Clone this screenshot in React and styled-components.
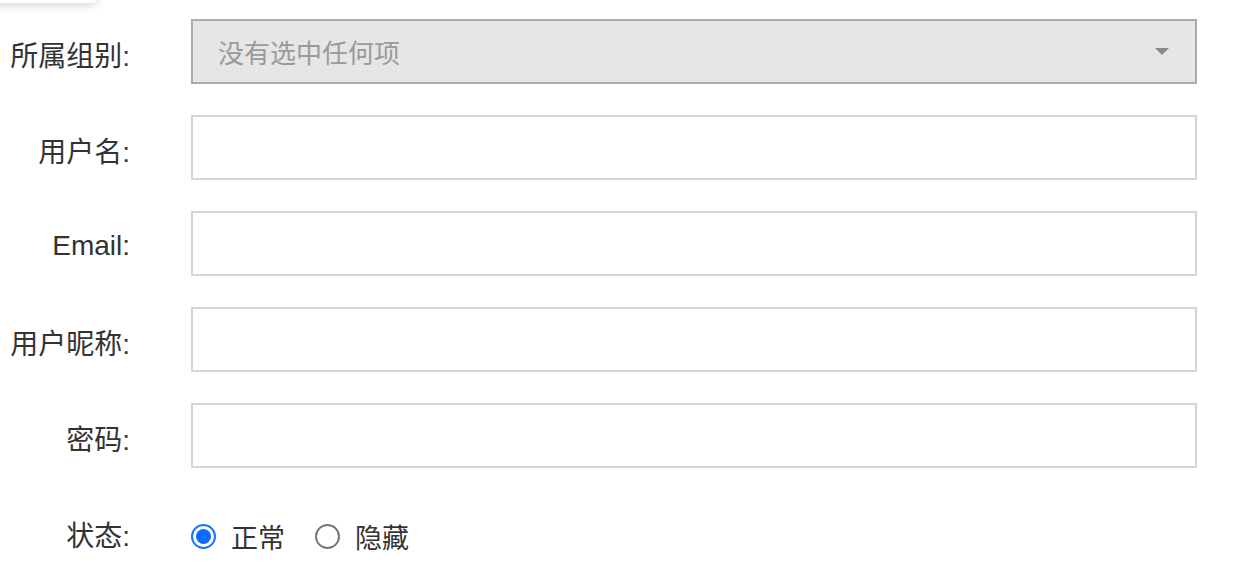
import styled, { createGlobalStyle } from 'styled-components'

const GlobalStyle = createGlobalStyle`
    body {
        margin: 0;
        background: #fff;
        font-family: 'Liberation Sans', 'Noto Sans CJK SC', sans-serif;
        color: #333;
    }
`

const Page = styled.div`
    position: relative;
    width: 1258px;
    height: 588px;
    overflow: hidden;
    padding-top: 19px;
    box-sizing: border-box;
`

const Popover = styled.div`
    position: absolute;
    left: -10px;
    top: -40px;
    width: 106px;
    height: 43px;
    background: #fff;
    border-radius: 4px;
    box-shadow: 0 2px 10px rgba(0, 0, 0, 0.18);
`

const Form = styled.div`
    display: flex;
    flex-direction: column;
    gap: 32px;
`

const Row = styled.div`
    display: flex;
    align-items: center;
    gap: 61px;
    height: 64px;
`

const Label = styled.div`
    width: 130px;
    text-align: right;
    font-size: 28px;
    color: #333;
    white-space: nowrap;
    padding-top: 6px;
`

const Input = styled.div`
    width: 1006px;
    height: 65px;
    box-sizing: border-box;
    border: 2px solid #d4d4dd;
    background: #fff;
`

const Select = styled.div`
    width: 1006px;
    height: 65px;
    box-sizing: border-box;
    border: 2px solid #ababab;
    background: #e6e6e6;
    display: flex;
    align-items: center;
    justify-content: space-between;
    padding: 0 26px 0 25px;
`

const Placeholder = styled.span`
    font-size: 26px;
    color: #9a9a9a;
`

const Caret = styled.span`
    width: 0;
    height: 0;
    border-left: 7px solid transparent;
    border-right: 7px solid transparent;
    border-top: 7px solid #8a8a8a;
`

const RadioGroup = styled.div`
    display: flex;
    align-items: center;
    gap: 30px;
    padding-top: 10px;
`

const RadioItem = styled.label`
    display: flex;
    align-items: center;
    gap: 15px;
    font-size: 27px;
    color: #333;
`

const Dot = styled.span`
    width: 25px;
    height: 25px;
    box-sizing: border-box;
    border-radius: 50%;
    border: 2px solid ${(props) => (props.checked ? '#1a73f5' : '#767676')};
    display: flex;
    align-items: center;
    justify-content: center;

    &::after {
        content: '';
        width: 15px;
        height: 15px;
        border-radius: 50%;
        background: ${(props) => (props.checked ? '#0a6cff' : 'transparent')};
    }
`

const fields = ['用户名:', 'Email:', '用户昵称:', '密码:']

const App = () => {
    return (
        <Page>
            <GlobalStyle />
            <Popover />
            <Form>
                <Row>
                    <Label>所属组别:</Label>
                    <Select>
                        <Placeholder>没有选中任何项</Placeholder>
                        <Caret />
                    </Select>
                </Row>
                {fields.map((f) => (
                    <Row key={f}>
                        <Label>{f}</Label>
                        <Input />
                    </Row>
                ))}
                <Row>
                    <Label>状态:</Label>
                    <RadioGroup>
                        <RadioItem>
                            <Dot checked />
                            正常
                        </RadioItem>
                        <RadioItem>
                            <Dot />
                            隐藏
                        </RadioItem>
                    </RadioGroup>
                </Row>
            </Form>
        </Page>
    )
}

export default App
